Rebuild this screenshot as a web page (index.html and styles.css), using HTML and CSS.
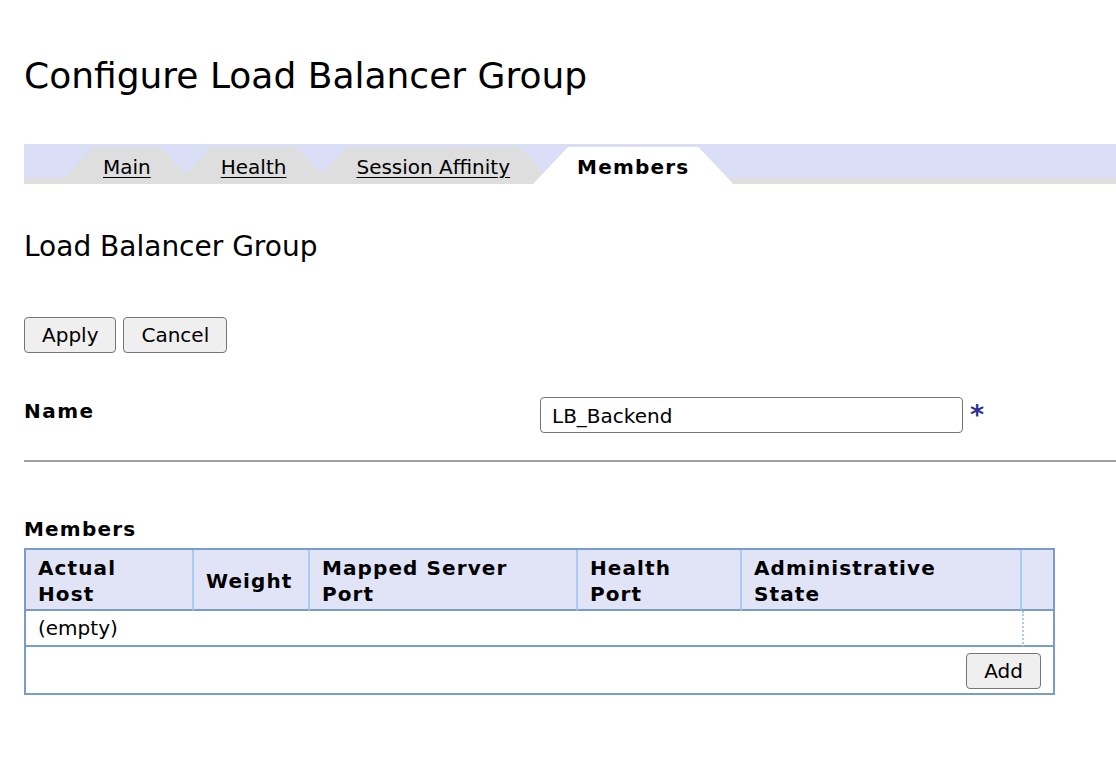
FILE: index.html
```html
<!DOCTYPE html>
<html lang="en">
<head>
<meta charset="utf-8">
<title>Configure Load Balancer Group</title>
<link rel="stylesheet" href="styles.css">
</head>
<body>
<div class="page">
  <h1 class="title">Configure Load Balancer Group</h1>

  <nav class="tabbar">
    <a class="tab tab-first" href="#">Main</a>
    <a class="tab" href="#">Health</a>
    <a class="tab" href="#">Session Affinity</a>
    <span class="tab tab-active">Members</span>
  </nav>

  <h2 class="subtitle">Load Balancer Group</h2>

  <div class="actions">
    <button class="btn" type="button">Apply</button>
    <button class="btn" type="button">Cancel</button>
  </div>

  <div class="field-row">
    <label class="field-label" for="name">Name</label>
    <input class="text-input" id="name" type="text" value="LB_Backend">
    <span class="required">*</span>
  </div>

  <hr class="divider">

  <div class="section-label">Members</div>
  <table class="grid">
    <colgroup>
      <col class="c1"><col class="c2"><col class="c3"><col class="c4"><col class="c5"><col class="c6">
    </colgroup>
    <thead>
      <tr>
        <th>Actual<br>Host</th>
        <th>Weight</th>
        <th>Mapped Server<br>Port</th>
        <th>Health<br>Port</th>
        <th>Administrative<br>State</th>
        <th class="last"></th>
      </tr>
    </thead>
    <tbody>
      <tr class="empty-row">
        <td colspan="5">(empty)</td>
        <td class="dotted"></td>
      </tr>
      <tr class="foot-row">
        <td colspan="6"><button class="btn" type="button">Add</button></td>
      </tr>
    </tbody>
  </table>
</div>
</body>
</html>
```

FILE: styles.css
```css
html, body {
  margin: 0;
  padding: 0;
  background: #ffffff;
}

body {
  font-family: "DejaVu Sans", Verdana, sans-serif;
  color: #000000;
  font-size: 20px;
  line-height: 24px;
}

.page {
  padding: 54px 0 40px 24px;
}

.title {
  margin: 0;
  font-size: 36px;
  line-height: 44px;
  font-weight: normal;
}

.tabbar {
  margin-top: 46px;
  height: 34px;
  background: #dadef6;
  border-bottom: 6px solid #dedede;
  display: flex;
  align-items: flex-end;
}

.tab {
  display: block;
  height: 31px;
  box-sizing: border-box;
  padding: 8px 39px 0;
  line-height: 24px;
  font-size: 20px;
  color: #000000;
  text-decoration: underline;
  text-underline-offset: 3px;
  background: #dedede;
  margin-left: -8px;
  clip-path: polygon(29px 0, calc(100% - 29px) 0, 100% 100%, 0 100%);
  white-space: nowrap;
}

.tab-first {
  margin-left: 40px;
}

.tab-active {
  height: 37px;
  margin-bottom: -6px;
  margin-left: -16px;
  padding: 8px 44px 0;
  background: #ffffff;
  font-weight: bold;
  letter-spacing: 1.2px;
  text-decoration: none;
  clip-path: polygon(35px 0, calc(100% - 35px) 0, 100% 100%, 0 100%);
}

.subtitle {
  margin: 46px 0 0;
  font-size: 28px;
  line-height: 34px;
  font-weight: normal;
}

.actions {
  margin-top: 53px;
  display: flex;
  gap: 7px;
}

.btn {
  font-family: "DejaVu Sans", Verdana, sans-serif;
  font-size: 20px;
  line-height: 24px;
  height: 36px;
  padding: 0 17px;
  border: 1px solid #767676;
  border-radius: 4px;
  background: #efefef;
  color: #000000;
}

.field-row {
  margin-top: 44px;
  display: grid;
  grid-template-columns: 516px 423px auto;
  align-items: start;
}

.field-label {
  font-weight: bold;
  letter-spacing: 1.5px;
  padding-top: 2px;
}

.text-input {
  box-sizing: border-box;
  width: 423px;
  height: 36px;
  margin: 0;
  padding: 1px 11px 0;
  border: 1px solid #767676;
  border-radius: 4px;
  font-family: "DejaVu Sans", Verdana, sans-serif;
  font-size: 20px;
  color: #000000;
  background: #ffffff;
}

.required {
  margin-left: 7px;
  padding-top: 3px;
  color: #2e3192;
  font-weight: bold;
  font-size: 27px;
  line-height: 30px;
}

.divider {
  margin: 27px 0 0;
  border: 0;
  height: 2px;
  background: #a0a0a0;
}

.section-label {
  margin-top: 55px;
  font-weight: bold;
  letter-spacing: 1.2px;
}

.grid {
  margin-top: 7px;
  width: 1031px;
  table-layout: fixed;
  border-collapse: separate;
  border-spacing: 0;
  border: 2px solid #7a9ccc;
}

.c1 { width: 168px; }
.c2 { width: 116px; }
.c3 { width: 268px; }
.c4 { width: 164px; }
.c5 { width: 280px; }
.c6 { width: 31px; }

.grid th {
  background: #e1e4f7;
  text-align: left;
  vertical-align: middle;
  font-weight: bold;
  letter-spacing: 1.1px;
  line-height: 26px;
  padding: 5px 12px 2px;
  border-right: 2px solid #a8cdf5;
  border-bottom: 2px solid #7a9ccc;
}

.grid th.last {
  border-right: 0;
}

.grid td {
  padding: 5px 12px;
  line-height: 24px;
}

.empty-row td {
  border-bottom: 2px solid #7a9ccc;
}

.empty-row td.dotted {
  border-left: 2px dotted #a8cdf5;
  padding: 0;
}

.foot-row td {
  padding: 6px 12px 4px;
  text-align: right;
}
```
